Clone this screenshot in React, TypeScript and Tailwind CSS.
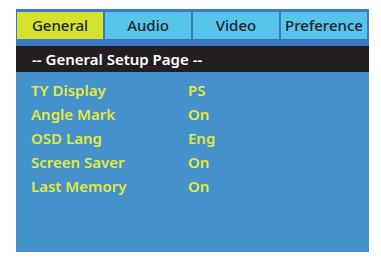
import React from "react";

const tabs = [
  { label: "General", active: true },
  { label: "Audio", active: false },
  { label: "Video", active: false },
  { label: "Preference", active: false },
];

const rows: [string, string][] = [
  ["TY Display", "PS"],
  ["Angle Mark", "On"],
  ["OSD Lang", "Eng"],
  ["Screen Saver", "On"],
  ["Last Memory", "On"],
];

export default function App() {
  return (
    <div
      className="w-[381px] h-[259px] bg-white pt-[9px] pl-[16px]"
      style={{ fontFamily: '"Noto Sans", "Open Sans", sans-serif' }}
    >
      <div className="w-[353px] h-[243px] bg-[#4591cb] flex flex-col">
        <div className="bg-[#3c79c5] pt-[3px] pb-[7px] pl-[1px] pr-[2px]">
          <div className="flex gap-[2px] h-[27px]">
            {tabs.map((t) => (
              <div
                key={t.label}
                className={`flex-1 flex items-center justify-center text-[15px] font-medium text-[#1f2430] ${
                  t.active ? "bg-[#d4e22b]" : "bg-[#57c4e9]"
                }`}
              >
                {t.label}
              </div>
            ))}
          </div>
        </div>
        <div className="h-[26px] bg-[#231f20] text-white text-[15px] font-semibold flex items-center pl-[16px]">
          -- General Setup Page --
        </div>
        <div className="pt-[6px] pl-[15px] flex flex-col">
          {rows.map(([k, v]) => (
            <div
              key={k}
              className="flex h-[24px] items-center text-[15px] font-semibold text-[#e3ea3c]"
            >
              <span className="w-[157px]">{k}</span>
              <span>{v}</span>
            </div>
          ))}
        </div>
      </div>
    </div>
  );
}
